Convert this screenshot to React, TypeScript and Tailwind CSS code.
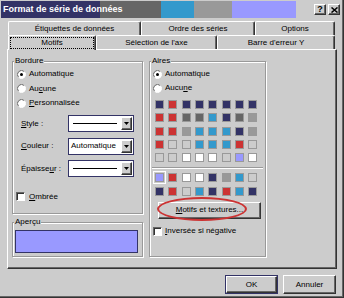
import React from "react";

const raised =
  "bg-[#cccccc] border border-t-white border-l-white border-r-[#333333] border-b-[#333333] shadow-[inset_-1px_-1px_0_#666666]";
const group =
  "border border-[#999999] shadow-[inset_1px_1px_0_#ffffff,1px_1px_0_#ffffff]";
const legend = "ml-[1px] px-[1px] bg-[#cccccc] leading-[10px]";
const tab =
  "h-[14px] flex items-center justify-center border-t border-l border-r border-t-white border-l-white border-r-[#333333] rounded-t-[2px] shadow-[inset_-1px_0_0_#666666]";

const SW: Record<string, string> = {
  N: "bg-[#333366]",
  R: "bg-[#cc3333]",
  C: "bg-[#3399cc]",
  D: "bg-[#666666]",
  G: "bg-[#999999]",
  L: "bg-[#cccccc]",
  W: "bg-white",
  P: "bg-[#9999ff]",
};

const topColors = ["NRNNNNNN", "RRDDCNDG", "RRGCCCNG", "RLLCCCRL", "LLWWWLPW"];
const bottomColors = ["PRWWNGCL", "NRLCNRCN"];

const U = ({ children }: { children: React.ReactNode }) => (
  <span className="underline decoration-1 underline-offset-[1px]">{children}</span>
);

const Radio = ({ on }: { on?: boolean }) => (
  <svg width="9" height="9" viewBox="0 0 9 9" className="shrink-0">
    <circle cx="4.5" cy="4.5" r="4" fill="white" />
    <path d="M1.67 7.33A4 4 0 0 1 7.33 1.67" fill="none" stroke="#666666" strokeWidth="1" />
    <path d="M7.33 1.67A4 4 0 0 1 1.67 7.33" fill="none" stroke="#ffffff" strokeWidth="1" />
    {on && <circle cx="4.5" cy="4.5" r="1.5" fill="black" />}
  </svg>
);

const Check = () => (
  <span className="w-[9px] h-[9px] shrink-0 bg-white border border-t-[#666666] border-l-[#666666] border-r-white border-b-white shadow-[inset_1px_1px_0_#333333]" />
);

const Arrow = () => (
  <div className={`w-[11px] h-[13px] flex items-center justify-center ${raised}`}>
    <svg width="5" height="3" viewBox="0 0 5 3">
      <path d="M0 0H5L2.5 3Z" fill="black" />
    </svg>
  </div>
);

const Combo = ({ children }: { children: React.ReactNode }) => (
  <div className="w-[66px] h-[17px] flex items-center justify-between bg-white border border-[#333366] pr-[1px]">
    {children}
    <Arrow />
  </div>
);

const Swatches = ({ rows, selected }: { rows: string[]; selected?: boolean }) => (
  <div className="grid grid-cols-[repeat(8,9px)] auto-rows-[9px] gap-[4.33px] ml-[5px]">
    {rows.map((row, r) =>
      row.split("").map((c, i) => (
        <div
          key={r + "-" + i}
          className={`border border-[#999999] ${SW[c]} ${
            selected && r === 0 && i === 0 ? "outline outline-1 outline-white outline-offset-[1px]" : ""
          }`}
        />
      ))
    )}
  </div>
);

export default function App() {
  return (
    <div className="w-[344px] h-[298px] bg-[#cccccc] border-r border-b border-[#333333] font-['Liberation_Sans',Arial,sans-serif] text-[8px] leading-none text-black select-none">
      <div className="h-full flex flex-col border-r border-b border-[#666666] pt-[1px] pl-[1px]">
        {/* title bar */}
        <div className="h-[17px] flex items-center justify-between pl-[2px] pr-[2px] bg-[linear-gradient(to_right,#333366_0px,#333366_99px,#666666_99px,#666666_160px,#3399cc_160px,#3399cc_193px,#999999_193px,#999999_231px,#9999ff_231px,#9999ff_295px,#cccccc_295px)]">
          <span className="text-white font-bold text-[9px]">Format de série de données</span>
          <div className="flex gap-[2px]">
            <div className={`w-[12px] h-[11px] flex items-center justify-center ${raised}`}>
              <span className="font-bold text-[9px]">?</span>
            </div>
            <div className={`w-[12px] h-[11px] flex items-center justify-center ${raised}`}>
              <svg width="7" height="6" viewBox="0 0 7 6">
                <path d="M0.5 0.5L6.5 5.5M6.5 0.5L0.5 5.5" stroke="black" strokeWidth="1.5" />
              </svg>
            </div>
          </div>
        </div>

        {/* tabs */}
        <div className="mt-[3px] ml-[7px] flex">
          <div className={`w-[133px] ${tab}`}>Étiquettes de données</div>
          <div className={`w-[114px] ${tab}`}>Ordre des séries</div>
          <div className={`w-[80px] ${tab}`}>Options</div>
        </div>
        <div className="ml-[7px] flex">
          <div className="relative z-10 w-[88px] h-[15px] -mb-px bg-[#cccccc] border-t border-l border-r border-t-white border-l-white border-r-[#333333] rounded-t-[2px] shadow-[inset_-1px_0_0_#666666] px-[1px] pt-[1px]">
            <div className="h-[12px] border border-dotted border-black flex items-center justify-center">
              Motifs
            </div>
          </div>
          <div className={`w-[121px] ${tab}`}>Sélection de l'axe</div>
          <div className={`w-[118px] ${tab}`}>Barre d'erreur Y</div>
        </div>

        {/* panel */}
        <div className="ml-[6px] w-[330px] h-[220px] border border-t-white border-l-white border-r-[#333333] border-b-[#333333] shadow-[inset_-1px_-1px_0_#666666] flex gap-[6px] pl-[4px] pt-[6px]">
          <div className="w-[131px] flex flex-col gap-[3px]">
            <fieldset className={`${group} h-[158px]`}>
              <legend className={legend}>Bordure</legend>
              <div className="flex flex-col pl-[4px] pt-[1px]">
                <div className="h-[14.5px] flex items-center gap-[3px]">
                  <Radio on />
                  <span>Automatique</span>
                </div>
                <div className="h-[14.5px] flex items-center gap-[3px]">
                  <Radio />
                  <span>
                    Au<U>c</U>une
                  </span>
                </div>
                <div className="h-[14.5px] flex items-center gap-[3px]">
                  <Radio />
                  <span>
                    <U>P</U>ersonnalisée
                  </span>
                </div>
              </div>
              <div className="mt-[4.5px] flex flex-col gap-[5.5px] pl-[8px]">
                <div className="h-[17px] flex items-center">
                  <span className="w-[47px]">
                    <U>S</U>tyle :
                  </span>
                  <Combo>
                    <div className="ml-[4px] w-[44px] h-px bg-black" />
                  </Combo>
                </div>
                <div className="h-[17px] flex items-center">
                  <span className="w-[47px]">
                    <U>C</U>ouleur :
                  </span>
                  <Combo>
                    <span className="ml-[2px]">Automatique</span>
                  </Combo>
                </div>
                <div className="h-[17px] flex items-center">
                  <span className="w-[47px]">
                    Épaisse<U>u</U>r :
                  </span>
                  <Combo>
                    <div className="ml-[4px] w-[44px] h-px bg-black" />
                  </Combo>
                </div>
              </div>
              <div className="mt-[15px] pl-[3px] h-[9px] flex items-center gap-[4px]">
                <Check />
                <span>
                  <U>O</U>mbrée
                </span>
              </div>
            </fieldset>

            <fieldset className={`${group} h-[40px]`}>
              <legend className={legend}>Aperçu</legend>
              <div className="mt-[3px] ml-[2px] w-[123px] h-[23px] bg-[#9999ff] border border-[#333366]" />
            </fieldset>
          </div>

          <fieldset className={`${group} w-[117px] h-[201px]`}>
            <legend className={legend}>Aires</legend>
            <div className="flex flex-col pl-[3px] pt-[1px]">
              <div className="h-[14px] flex items-center gap-[3px]">
                <Radio on />
                <span>Automatique</span>
              </div>
              <div className="h-[14px] flex items-center gap-[3px]">
                <Radio />
                <span>
                  Aucu<U>n</U>e
                </span>
              </div>
            </div>
            <div className="mt-[5px]">
              <Swatches rows={topColors} />
            </div>
            <div className="mt-[4.7px] mx-[2px] h-[2px] border-t border-t-[#999999] border-b border-b-white" />
            <div className="mt-[4.3px]">
              <Swatches rows={bottomColors} selected />
            </div>
            <div className="relative mt-[6.3px] ml-[8px] w-[103px] h-[17px]">
              <div className={`w-full h-full flex items-center justify-center ${raised}`}>
                <span>
                  <U>M</U>otifs et textures...
                </span>
              </div>
              <div className="absolute left-[-1px] top-[-5px] w-[90px] h-[24px] rounded-[50%] border-2 border-[#cc3333]" />
            </div>
            <div className="mt-[8px] pl-[3px] h-[9px] flex items-center gap-[3px]">
              <Check />
              <span>
                <U>I</U>nversée si négative
              </span>
            </div>
          </fieldset>
        </div>

        {/* buttons */}
        <div className="mt-[6px] flex justify-end gap-[5px] pr-[6px]">
          <div className="w-[53px] h-[19px] border border-[#333366]">
            <div className={`w-full h-full flex items-center justify-center ${raised}`}>OK</div>
          </div>
          <div className={`w-[53px] h-[19px] flex items-center justify-center ${raised}`}>Annuler</div>
        </div>
      </div>
    </div>
  );
}
